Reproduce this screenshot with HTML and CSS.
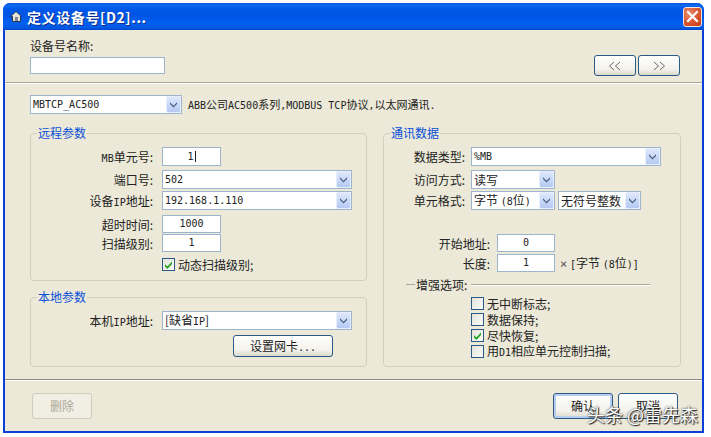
FILE: index.html
```html
<!DOCTYPE html>
<html lang="zh">
<head>
<meta charset="utf-8">
<title>定义设备号</title>
<link rel="stylesheet" href="styles.css">
</head>
<body>
<svg class="defs" width="0" height="0">
  <defs>
    <symbol id="chev" viewBox="0 0 9 7"><path d="M1 1.2 4.5 4.7 8 1.2V3L4.5 6.5 1 3Z" fill="#4d6185"/></symbol>
    <symbol id="tick" viewBox="0 0 11 11"><path d="M2 5.2 4.4 7.6 9 2.6V5L4.4 10 2 7.4Z" fill="#21a121"/></symbol>
  </defs>
</svg>
<div class="window">
  <header class="titlebar">
    <svg class="appicon" width="12" height="11" viewBox="0 0 12 11"><path d="M6 .5 .5 5.5H2.5V10.5H10.5V4.5L6 .5Z" fill="#e8e4d8" stroke="#27384f"/><path d="M5 6h3v4H5Z" fill="#7d8796"/></svg>
    <span class="title">定义设备号[D2]...</span>
    <span class="close"><svg width="13" height="13" viewBox="0 0 13 13"><path d="M2 2 11 11M11 2 2 11" stroke="#fff" stroke-width="2.2" stroke-linecap="square"/></svg></span>
  </header>
  <div class="client">
    <section class="namebar">
      <div class="namefield">
        <div class="namelabel">设备号名称:</div>
        <div class="input nameinput"></div>
      </div>
      <div class="navbtns">
        <button class="btn nav"><svg width="14" height="10" viewBox="0 0 14 10"><path d="M6 1 1.500 5 6 9M12 1 7.500 5 12 9" fill="none" stroke="#666"/></svg></button>
        <button class="btn nav"><svg width="14" height="10" viewBox="0 0 14 10"><path d="M2 1 6.500 5 2 9M8 1 12.500 5 8 9" fill="none" stroke="#666"/></svg></button>
      </div>
    </section>
    <main class="main">
      <div class="driver">
        <div class="combo driver-combo"><span class="val lat">MBTCP_AC500</span><span class="arrow"><svg width="9" height="7"><use href="#chev"/></svg></span></div>
        <p class="desc"><span class="lat">ABB</span>公司<span class="lat">AC500</span>系列<span class="lat">,MODBUS TCP</span>协议<span class="lat">,</span>以太网通讯<span class="lat">.</span></p>
      </div>
      <div class="groups">
        <div class="leftcol">
          <section class="group remote">
            <h2 class="legend">远程参数</h2>
            <label class="lab"><span class="lat">MB</span>单元号:</label>
            <div class="input short"><span class="lat">1</span><i class="caret"></i></div>
            <label class="lab">端口号:</label>
            <div class="combo"><span class="val lat">502</span><span class="arrow"><svg width="9" height="7"><use href="#chev"/></svg></span></div>
            <label class="lab">设备<span class="lat">IP</span>地址:</label>
            <div class="combo"><span class="val lat">192.168.1.110</span><span class="arrow"><svg width="9" height="7"><use href="#chev"/></svg></span></div>
            <label class="lab">超时时间:</label>
            <div class="input short tiny"><span class="lat">1000</span></div>
            <label class="lab">扫描级别:</label>
            <div class="input short tiny"><span class="lat">1</span></div>
            <span></span>
            <div class="check"><span class="box"><svg width="11" height="11"><use href="#tick"/></svg></span><span>动态扫描级别;</span></div>
          </section>
          <section class="group local">
            <h2 class="legend">本地参数</h2>
            <label class="lab">本机<span class="lat">IP</span>地址:</label>
            <div class="combo"><span class="val">[缺省<span class="lat">IP</span>]</span><span class="arrow"><svg width="9" height="7"><use href="#chev"/></svg></span></div>
            <span></span>
            <button class="btn nic"><span>设置网卡<span class="lat">...</span></span></button>
          </section>
        </div>
        <section class="group comm">
          <h2 class="legend">通讯数据</h2>
          <div class="commgrid">
            <label class="lab">数据类型:</label>
            <div class="combo"><span class="val lat">%MB</span><span class="arrow"><svg width="9" height="7"><use href="#chev"/></svg></span></div>
            <label class="lab">访问方式:</label>
            <div class="combo c84"><span class="val">读写</span><span class="arrow"><svg width="9" height="7"><use href="#chev"/></svg></span></div>
            <label class="lab">单元格式:</label>
            <div class="pair">
              <div class="combo c84"><span class="val">字节 <span class="lat">(8</span>位<span class="lat">)</span></span><span class="arrow"><svg width="9" height="7"><use href="#chev"/></svg></span></div>
              <div class="combo c83"><span class="val">无符号整数</span><span class="arrow"><svg width="9" height="7"><use href="#chev"/></svg></span></div>
            </div>
          </div>
          <div class="addrgrid">
            <label class="lab">开始地址:</label>
            <div class="input short tiny addr"><span class="lat">0</span></div>
            <label class="lab">长度:</label>
            <div class="lenrow"><div class="input short tiny addr"><span class="lat">1</span></div><span class="unit"><span class="times">×</span> <span class="lat">[</span>字节 <span class="lat">(8</span>位<span class="lat">)]</span></span></div>
          </div>
          <div class="enh"><span class="enhtitle">增强选项:</span></div>
          <div class="checks">
            <div class="check"><span class="box"></span><span>无中断标志;</span></div>
            <div class="check"><span class="box"></span><span>数据保持;</span></div>
            <div class="check"><span class="box"><svg width="11" height="11"><use href="#tick"/></svg></span><span>尽快恢复;</span></div>
            <div class="check"><span class="box"></span><span>用<span class="lat">D1</span>相应单元控制扫描;</span></div>
          </div>
        </section>
      </div>
    </main>
    <footer class="footer">
      <button class="btn act" disabled>删除</button>
      <div class="footright">
        <button class="btn act default">确认</button>
        <button class="btn act">取消</button>
      </div>
    </footer>
  </div>
  <div class="watermark">头条 @雷先森</div>
</div>
</body>
</html>
```
FILE: styles.css
```css
* { box-sizing: border-box; }
html, body { margin: 0; height: 100%; }
body {
  background: #fff;
  padding: 3px 0 0 3px;
  font: 12px/1 "Noto Sans CJK SC", "Liberation Sans", sans-serif;
  color: #222;
}
.defs { position: absolute; }
.lat { font-family: "DejaVu Sans Mono", "Noto Sans CJK SC", monospace; font-size: 10px; }
.times { font-family: "DejaVu Sans Mono", monospace; font-size: 12px; color: #555; }

.window {
  position: relative;
  width: 701px;
  height: 430px;
  display: flex;
  flex-direction: column;
  border-radius: 7px 7px 0 0;
  background: #0a3fd8;
  overflow: hidden;
}
.titlebar {
  flex: 0 0 27px;
  display: flex;
  align-items: center;
  padding: 0 2px 0 7px;
  background: linear-gradient(#0a4fd6 0, #0a6cf2 2px, #0058e8 6px, #0054e3 12px, #0060f0 20px, #0258e2 25px, #0046c8 27px);
}
.appicon { flex: none; }
.title {
  margin-left: 5px;
  flex: 1;
  color: #fff;
  font-size: 14px;
  font-weight: bold;
  letter-spacing: .6px;
  text-shadow: 1px 1px 0 #0f2f8a;
  white-space: nowrap;
}
.close {
  width: 19px;
  height: 20px;
  display: flex;
  align-items: center;
  justify-content: center;
  border: 1px solid #f4e4dc;
  border-radius: 3px;
  background: radial-gradient(circle at 30% 30%, #e88a6a, #d8502c 60%, #c23b14);
}

.client {
  flex: 1;
  margin: 0 2px 2px 2px;
  background: #ece9d8;
  display: flex;
  flex-direction: column;
}
.namebar {
  flex: 0 0 53px;
  display: flex;
  justify-content: space-between;
  align-items: flex-start;
  padding: 8px 22px 0 25px;
  border-bottom: 1px solid #aca899;
  box-shadow: 0 1px 0 #fff;
}
.namelabel { height: 19px; line-height: 15px; }
.input {
  background: #fff;
  border: 1px solid #9db4cd;
  display: flex;
  align-items: center;
  justify-content: center;
}
.nameinput { width: 135px; height: 17px; }
.navbtns { display: flex; gap: 2px; margin-top: 17px; }

.btn {
  font: inherit;
  color: #222;
  padding: 0;
  border: 1px solid #2a5a87;
  border-radius: 3px;
  background: linear-gradient(#fff, #f3f2ec 70%, #dcd8ca);
  display: flex;
  align-items: center;
  justify-content: center;
}
.nav { width: 42px; height: 21px; }

.main { flex: 1; padding: 12px 0 0 25px; }
.driver { display: flex; align-items: center; gap: 6px; height: 19px; }
.driver-combo { width: 152px; }
.desc { margin: 0; white-space: nowrap; font-size: 11px; }

.combo {
  height: 19px;
  background: #fff;
  border: 1px solid #9db4cd;
  display: flex;
  align-items: center;
  justify-content: space-between;
  white-space: nowrap;
}
.val { padding-left: 2px; }
.arrow {
  flex: none;
  width: 15px;
  height: 17px;
  display: flex;
  align-items: center;
  justify-content: center;
  background: linear-gradient(#dfe8fc, #b4c9f3);
  border: 1px solid #e6eefc;
  border-radius: 2px;
}
.c84 { width: 84px; }
.c83 { width: 83px; }

.groups { display: flex; gap: 16px; margin-top: 19px; }
.leftcol { width: 337px; display: flex; flex-direction: column; gap: 16px; }
.group {
  position: relative;
  border: 1px solid #d0d0bf;
  border-radius: 4px;
}
.legend {
  position: absolute;
  top: -8px;
  left: 6px;
  margin: 0;
  padding: 0 1px;
  font-size: 12px;
  font-weight: normal;
  line-height: 13px;
  color: #0a50d8;
  background: #ece9d8;
}
.lab {
  text-align: right;
  white-space: nowrap;
  line-height: 19px;
}
.remote, .local {
  display: grid;
  grid-template-columns: 122px 190px;
  column-gap: 9px;
  align-items: start;
  align-content: start;
}
.remote {
  height: 148px;
  padding-top: 13px;
  grid-template-rows: 23px 21px 24px 19px 24px 13px;
}
.local {
  height: 70px;
  padding-top: 13px;
  grid-template-rows: 24px 22px;
}
.short { width: 59px; height: 19px; }
.tiny { height: 18px; }
.caret { display: block; width: 1px; height: 11px; background: #222; margin-left: 1px; }
.nic { width: 100px; height: 22px; margin-left: 71px; }

.comm { width: 298px; height: 234px; padding-top: 13px; }
.commgrid {
  display: grid;
  grid-template-columns: 81px 190px;
  grid-template-rows: 23px 21px 19px;
  column-gap: 6px;
  align-items: start;
}
.pair { display: flex; gap: 3px; }
.addrgrid {
  display: grid;
  grid-template-columns: 106px auto;
  grid-template-rows: 20px 18px;
  column-gap: 7px;
  margin-top: 24px;
  align-items: start;
}
.addr { width: 58px; }
.lenrow { display: flex; align-items: center; gap: 5px; }
.unit { white-space: nowrap; }
.enh {
  display: flex;
  align-items: center;
  gap: 1px;
  width: 244px;
  margin: 6px 0 0 22px;
  height: 13px;
}
.enh::before { content: ""; width: 9px; border-top: 1px solid #aca899; }
.enh::after { content: ""; flex: 1; margin-left: 3px; border-top: 1px solid #aca899; box-shadow: 0 1px 0 #fff; }
.checks {
  display: flex;
  flex-direction: column;
  gap: 3px;
  margin: 6px 0 0 87px;
}
.check { display: flex; align-items: center; gap: 3px; height: 13px; white-space: nowrap; }
.box {
  flex: none;
  width: 13px;
  height: 13px;
  border: 1px solid #2a5a87;
  background: linear-gradient(135deg, #e3e2da, #fbfbf8);
  display: flex;
  align-items: center;
  justify-content: center;
}

.footer {
  flex: 0 0 52px;
  display: flex;
  justify-content: space-between;
  padding: 13px 24px 0 27px;
  border-top: 1px solid #8f8c7e;
  box-shadow: inset 0 1px 0 #fff;
}
.footright { display: flex; gap: 5px; }
.act { width: 60px; height: 26px; }
.act:disabled {
  color: #aca899;
  border-color: #cfccbc;
  background: #f1efe4;
}
.default { box-shadow: inset 0 0 0 2px #b8cdf0; }
.watermark {
  position: absolute;
  left: 584px;
  top: 399px;
  font-size: 18px;
  line-height: 24px;
  color: #fff;
  white-space: nowrap;
  text-shadow: 0 0 2px #222, 1px 1px 1px #222;
}
```
